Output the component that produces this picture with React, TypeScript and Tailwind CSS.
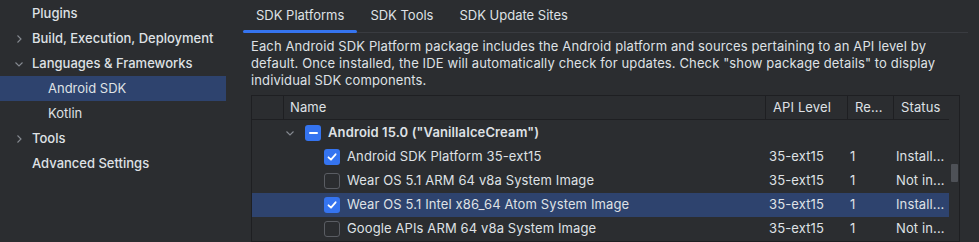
import React from "react";

const sideItems = [
  { label: "Plugins", level: 0, chevron: "" },
  { label: "Build, Execution, Deployment", level: 0, chevron: "right" },
  { label: "Languages & Frameworks", level: 0, chevron: "down" },
  { label: "Android SDK", level: 1, chevron: "", active: true },
  { label: "Kotlin", level: 1, chevron: "" },
  { label: "Tools", level: 0, chevron: "right" },
  { label: "Advanced Settings", level: 0, chevron: "" },
];

const rows = [
  { name: "Android SDK Platform 35-ext15", checked: true, status: "Install..." },
  { name: "Wear OS 5.1 ARM 64 v8a System Image", checked: false, status: "Not in..." },
  { name: "Wear OS 5.1 Intel x86_64 Atom System Image", checked: true, status: "Install...", selected: true },
  { name: "Google APIs ARM 64 v8a System Image", checked: false, status: "Not in..." },
];

function Chevron({ dir }: { dir: string }) {
  return (
    <svg width="10" height="10" viewBox="0 0 10 10" fill="none" stroke="#868a91" strokeWidth="1.1">
      {dir === "right" ? <path d="M3.5 1.5 L7 5 L3.5 8.5" /> : <path d="M1.5 3.5 L5 7 L8.5 3.5" />}
    </svg>
  );
}

function Check({ checked }: { checked: boolean }) {
  if (!checked)
    return <div className="w-[16px] h-[16px] rounded-[3px] border border-[#5a5d63] bg-[#2b2d30]" />;
  return (
    <div className="w-[16px] h-[16px] rounded-[3px] bg-[#3574f0] flex items-center justify-center">
      <svg width="12" height="12" viewBox="0 0 12 12" fill="none" stroke="white" strokeWidth="1.8" strokeLinecap="round" strokeLinejoin="round">
        <path d="M2.5 6.3 L5 8.7 L9.6 3.3" />
      </svg>
    </div>
  );
}

export default function App() {
  return (
    <div
      className="w-[979px] h-[242px] overflow-hidden flex bg-[#2b2d30] text-[#dfe1e5] text-[13px]"
      style={{ fontFamily: "Inter, 'Noto Sans', sans-serif" }}
    >
      {/* sidebar */}
      <div className="w-[226px] shrink-0 pt-[1px]">
        {sideItems.map((it) => (
          <div
            key={it.label}
            className={`h-[25px] flex items-center ${it.active ? "bg-[#2e436e]" : ""}`}
            style={{ paddingLeft: it.level ? 48 : 14 }}
          >
            {it.level === 0 && (
              <div className="w-[18px] flex items-center">{it.chevron && <Chevron dir={it.chevron} />}</div>
            )}
            <span className={it.level === 0 ? "font-medium" : ""}>{it.label}</span>
          </div>
        ))}
      </div>

      {/* main */}
      <div className="flex-1 pl-[17px] pr-[11px] tracking-[0.12px]">
        <div className="flex h-[33px] border-b border-[#393b40] tracking-normal">
          <div className="px-[13px] flex items-center relative">
            SDK Platforms
            <div className="absolute left-0 right-0 bottom-[-1px] h-[3px] rounded-[2px] bg-[#3574f0]" />
          </div>
          <div className="px-[13px] flex items-center">SDK Tools</div>
          <div className="px-[13px] flex items-center">SDK Update Sites</div>
        </div>

        <div className="pl-[8px] pr-[8px]">
          <p className="mt-[5px] leading-[17px]">
            Each Android SDK Platform package includes the Android platform and sources pertaining to an API level by
            default. Once installed, the IDE will automatically check for updates. Check "show package details" to display
            individual SDK components.
          </p>

          <div className="mt-[6px] border border-[#1e1f22] flex">
            <div className="flex-1">
              <div className="h-[24px] flex border-b border-[#1e1f22]">
                <div className="w-[31px]" />
                <div className="flex-1 border-l border-[#1e1f22] pl-[6px] flex items-center">Name</div>
                <div className="w-[82px] border-l border-[#1e1f22] pl-[7px] flex items-center">API Level</div>
                <div className="w-[46px] border-l border-[#1e1f22] pl-[7px] flex items-center">Re...</div>
                <div className="w-[56px] border-l border-[#1e1f22] pl-[7px] flex items-center">Status</div>
              </div>

              <div className="h-[25px] flex items-center pl-[33px]">
                <Chevron dir="down" />
                <div className="ml-[10px] w-[16px] h-[16px] rounded-[3px] bg-[#3574f0] flex items-center justify-center">
                  <div className="w-[9px] h-[2px] bg-white rounded-[1px]" />
                </div>
                <span className="ml-[7px] font-semibold">Android 15.0 ("VanillaIceCream")</span>
              </div>

              {rows.map((r) => (
                <div key={r.name} className={`h-[24px] flex items-center ${r.selected ? "bg-[#2e436e]" : ""}`}>
                  <div className="flex-1 flex items-center pl-[72px]">
                    <Check checked={r.checked} />
                    <span className="ml-[7px]">{r.name}</span>
                  </div>
                  <div className="w-[82px] pl-[4px]">35-ext15</div>
                  <div className="w-[46px] pl-[3px]">1</div>
                  <div className="w-[56px] pl-[3px] whitespace-nowrap">{r.status}</div>
                </div>
              ))}
            </div>
            <div className="w-[10px] border-l border-[#2b2d30]">
              <div className="mt-[68px] ml-[1px] w-[7px] h-[18px] bg-[#4e5157] rounded-[1px]" />
            </div>
          </div>
        </div>
      </div>
    </div>
  );
}
